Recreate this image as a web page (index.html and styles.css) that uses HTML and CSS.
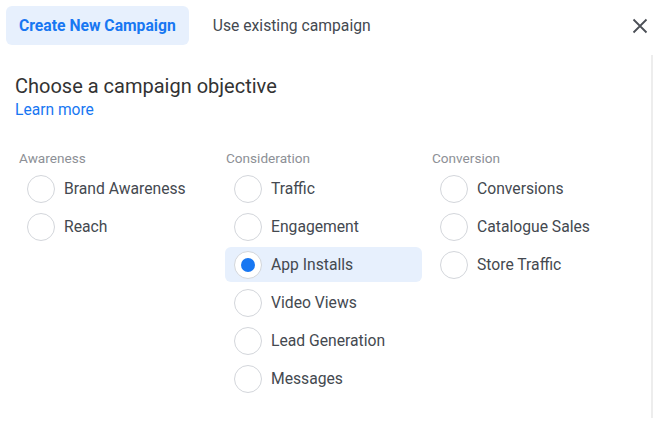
FILE: index.html
```html
<!DOCTYPE html>
<html lang="en">
<head>
<meta charset="utf-8">
<title>Campaign objective</title>
<link rel="stylesheet" href="styles.css">
</head>
<body>
<div class="dialog">
  <header class="header">
    <div class="tab tab-active">Create New Campaign</div>
    <div class="tab">Use existing campaign</div>
    <button class="close" aria-label="Close">
      <svg width="16" height="16" viewBox="0 0 16 16"><path d="M1.5 1.5 L14.5 14.5 M14.5 1.5 L1.5 14.5" stroke="#4b4f56" stroke-width="1.8" fill="none"/></svg>
    </button>
  </header>
  <section class="body">
    <h1 class="title">Choose a campaign objective</h1>
    <a class="learn" href="#">Learn more</a>
    <div class="columns">
      <div class="column">
        <div class="col-head">Awareness</div>
        <div class="option"><span class="radio"></span><span class="label">Brand Awareness</span></div>
        <div class="option"><span class="radio"></span><span class="label">Reach</span></div>
      </div>
      <div class="column">
        <div class="col-head">Consideration</div>
        <div class="option"><span class="radio"></span><span class="label">Traffic</span></div>
        <div class="option"><span class="radio"></span><span class="label">Engagement</span></div>
        <div class="option selected"><span class="radio"></span><span class="label">App Installs</span></div>
        <div class="option"><span class="radio"></span><span class="label">Video Views</span></div>
        <div class="option"><span class="radio"></span><span class="label">Lead Generation</span></div>
        <div class="option"><span class="radio"></span><span class="label">Messages</span></div>
      </div>
      <div class="column">
        <div class="col-head">Conversion</div>
        <div class="option"><span class="radio"></span><span class="label">Conversions</span></div>
        <div class="option"><span class="radio"></span><span class="label">Catalogue Sales</span></div>
        <div class="option"><span class="radio"></span><span class="label">Store Traffic</span></div>
      </div>
    </div>
  </section>
</div>
</body>
</html>
```
FILE: styles.css
```css
* { box-sizing: border-box; }
html, body { margin: 0; padding: 0; background: #fff; }
body {
  width: 653px;
  height: 425px;
  overflow: hidden;
  font-family: Roboto, "Liberation Sans", Arial, sans-serif;
  color: #444950;
}
.dialog { width: 653px; }
.header {
  display: flex;
  align-items: flex-start;
  height: 55px;
  padding: 6px 0 0 6px;
}
.tab {
  height: 39px;
  line-height: 40px;
  padding: 0 13px;
  font-size: 15.7px;
  color: #444950;
  border-radius: 6px;
  margin-right: 11px;
}
.tab-active {
  background: #e7f0fd;
  color: #1877f2;
  font-weight: 700;
}
.close {
  margin-left: auto;
  margin-right: 0;
  margin-top: 7px;
  width: 26px;
  height: 26px;
  border: 0;
  background: none;
  padding: 0;
  display: flex;
  align-items: center;
  justify-content: center;
}
.body {
  height: 363px;
  border-right: 2px solid #ededed;
  padding: 19px 0 0 15px;
}
.title {
  margin: 0;
  font-size: 20px;
  line-height: 24px;
  font-weight: 400;
  color: #333;
}
.learn {
  display: block;
  margin-top: 3px;
  font-size: 15.6px;
  line-height: 18px;
  color: #1877f2;
  text-decoration: none;
}
.columns {
  display: grid;
  grid-template-columns: 207px 206px 206px;
  margin: 31px 0 0 3px;
}
.col-head {
  padding-left: 1px;
  font-size: 13.6px;
  line-height: 16px;
  color: #8d9096;
  margin-bottom: 5px;
}
.option {
  display: flex;
  align-items: center;
  gap: 9px;
  width: 197px;
  height: 35px;
  margin-bottom: 3px;
  padding-left: 9px;
  border-radius: 6px;
}
.option.selected { background: #e7f0fd; }
.radio {
  width: 28px;
  height: 28px;
  flex: none;
  border-radius: 50%;
  border: 1px solid #d3d6db;
  background: #fff;
  display: flex;
  align-items: center;
  justify-content: center;
}
.option.selected .radio::after {
  content: "";
  width: 14px;
  height: 14px;
  border-radius: 50%;
  background: #1877f2;
}
.label {
  font-size: 15.7px;
  color: #444950;
}
```
